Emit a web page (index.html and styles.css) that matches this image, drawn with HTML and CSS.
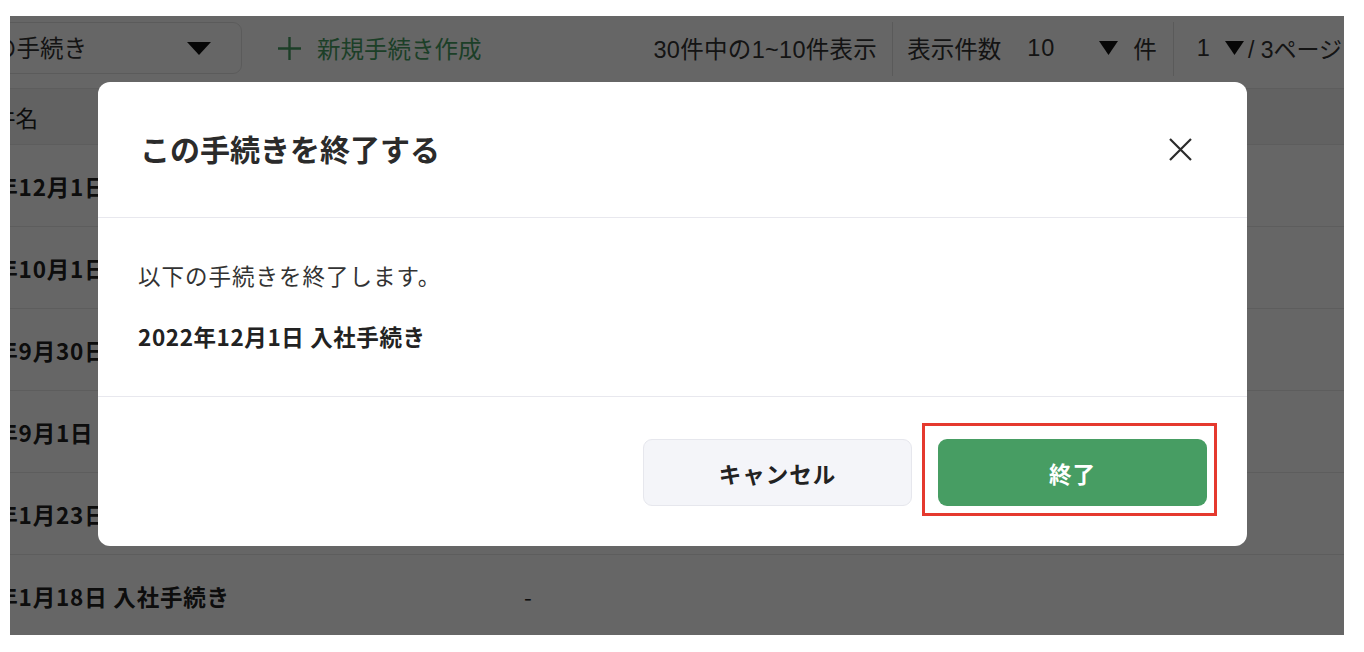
FILE: index.html
```html
<!DOCTYPE html>
<html lang="ja">
<head>
<meta charset="utf-8">
<title>手続き一覧</title>
<link rel="stylesheet" href="styles.css">
</head>
<body>
<div class="screen">
  <div class="page">
    <div class="toolbar">
      <div class="select">
        <span class="select-text">すべての手続き</span>
        <svg class="caret" width="24" height="13" viewBox="0 0 24 13"><polygon points="0,0 24,0 12,13" fill="#111"/></svg>
      </div>
      <div class="new-proc">
        <svg class="plus" width="25" height="25" viewBox="0 0 25 25"><path d="M12.5 1v23M1 12.5h23" stroke="#479d63" stroke-width="2.4" fill="none"/></svg>
        <span>新規手続き作成</span>
      </div>
      <div class="count">30件中の1~10件表示</div>
      <div class="sep"></div>
      <div class="perpage">
        <span>表示件数</span>
        <span class="num">10</span>
        <svg class="small-caret" width="19" height="14" viewBox="0 0 19 14"><polygon points="0,0 19,0 9.5,14" fill="#111"/></svg>
        <span class="unit">件</span>
      </div>
      <div class="sep"></div>
      <div class="pager">
        <span class="num">1</span>
        <svg class="small-caret" width="19" height="14" viewBox="0 0 19 14"><polygon points="0,0 19,0 9.5,14" fill="#111"/></svg>
        <span class="pages">/ 3ページ</span>
      </div>
    </div>
    <div class="table">
      <div class="row head"><div class="c1">件名</div><div class="c2">備考</div></div>
      <div class="row"><div class="c1 name">2022年12月1日 入社手続き</div><div class="c2">-</div></div>
      <div class="row"><div class="c1 name">2022年10月1日 入社手続き</div><div class="c2">-</div></div>
      <div class="row"><div class="c1 name">2022年9月30日 入社手続き</div><div class="c2">-</div></div>
      <div class="row"><div class="c1 name">2022年9月1日 入社手続き</div><div class="c2">-</div></div>
      <div class="row"><div class="c1 name">2022年1月23日 入社手続き</div><div class="c2">-</div></div>
      <div class="row"><div class="c1 name">2022年1月18日 入社手続き</div><div class="c2">-</div></div>
    </div>
  </div>
  <div class="overlay">
    <div class="modal">
      <div class="modal-head">
        <h2 class="modal-title">この手続きを終了する</h2>
        <svg class="close" width="23" height="23" viewBox="0 0 23 23"><path d="M1 1L22 22M22 1L1 22" stroke="#2a2a2a" stroke-width="2.2" fill="none"/></svg>
      </div>
      <div class="modal-body">
        <p class="msg">以下の手続きを終了します。</p>
        <p class="target">2022年12月1日 入社手続き</p>
      </div>
      <div class="modal-foot">
        <button class="btn btn-cancel">キャンセル</button>
        <div class="finish-wrap">
          <button class="btn btn-finish">終了</button>
          <div class="highlight"></div>
        </div>
      </div>
    </div>
  </div>
</div>
</body>
</html>
```
FILE: styles.css
```css
* { box-sizing: border-box; }
html, body { margin: 0; padding: 0; background: #fff; }
body { font-family: "Noto Sans CJK JP", "Noto Sans", sans-serif; color: #333; }

.screen {
  position: relative;
  margin: 16px 0 0 10px;
  width: 1334px;
  height: 619px;
  overflow: hidden;
  background: #fff;
}

.page { width: 1334px; }

.toolbar {
  height: 72px;
  display: flex;
  align-items: flex-start;
  padding-top: 6px;
  font-family: "Liberation Sans", "Noto Sans CJK JP", sans-serif;
  font-size: 23.5px;
  color: #333;
  white-space: nowrap;
}

.select {
  flex: none;
  width: 360px;
  height: 52px;
  margin-left: -128px;
  padding: 0 30px 0 42px;
  display: flex;
  align-items: center;
  border: 1px solid #e4e4e4;
  border-radius: 9px;
  font-family: "Noto Sans CJK JP", sans-serif;
}
.select-text { line-height: 1; }
.caret { margin-left: auto; }

.new-proc {
  height: 52px;
  margin-left: 35px;
  display: flex;
  align-items: center;
  gap: 15px;
  color: #479d63;
  font-family: "Noto Sans CJK JP", sans-serif;
}

.count {
  height: 52px;
  margin-left: 172px;
  display: flex;
  align-items: center;
  letter-spacing: 0.3px;
}

.sep {
  flex: none;
  width: 1px;
  height: 54px;
  margin: 0 14px 0 15px;
  background: #e2e2e2;
}

.perpage, .pager {
  flex: none;
  height: 52px;
  display: flex;
  align-items: center;
}
.perpage .num { margin-left: 26px; letter-spacing: 1px; }
.perpage .small-caret { margin-left: 44px; }
.perpage .unit { margin-left: 15px; margin-right: 1px; }
.pager .num { margin-left: 9px; }
.pager .small-caret { margin-left: 15px; }
.pager .pages { margin-left: 4px; font-size: 23px; }

.table { border-top: 1px solid #e8e8e8; }
.row {
  height: 82px;
  display: flex;
  align-items: center;
  border-bottom: 1px solid #e8e8e8;
  font-size: 22.5px;
  color: #222;
  white-space: nowrap;
}
.row.head {
  height: 56px;
  background: #f4f4f4;
  font-weight: 400;
}
.c1 { width: 514px; flex: none; }
.row.head .c1 { text-indent: -17px; }
.c1.name { text-indent: -71px; font-weight: 700; letter-spacing: 0.8px; }
.c2 { flex: none; }

.overlay {
  position: absolute;
  inset: 0;
  background: rgba(0, 0, 0, 0.6);
  padding: 66px 0 0 88px;
}

.modal {
  width: 1149px;
  background: #fff;
  border-radius: 12px;
}

.modal-head {
  height: 136px;
  padding: 0 55px 0 42px;
  display: flex;
  align-items: center;
  justify-content: space-between;
  border-bottom: 1px solid #e8e8ee;
}
.modal-title {
  margin: 0 0 4px;
  font-size: 30px;
  font-weight: 700;
  color: #2b2b2b;
  line-height: 1.2;
}

.modal-body {
  padding: 41px 40px 43px;
  border-bottom: 1px solid #e8e8ee;
}
.modal-body p {
  margin: 0;
  font-size: 22.5px;
  line-height: 33px;
  color: #333;
  letter-spacing: 1px;
}
.modal-body .target {
  margin-top: 28px;
  font-weight: 700;
  color: #222;
  letter-spacing: 0.6px;
}

.modal-foot {
  padding: 42px 40px 40px;
  display: flex;
  justify-content: flex-end;
  gap: 26px;
}

.btn {
  width: 269px;
  height: 67px;
  border-radius: 9px;
  font-family: "Noto Sans CJK JP", sans-serif;
  font-size: 22.5px;
  font-weight: 700;
  cursor: pointer;
}
.btn-cancel {
  background: #f4f5f9;
  border: 1px solid #e6e7ed;
  color: #222;
  letter-spacing: 1px;
}
.btn-finish {
  display: block;
  background: #479d63;
  border: none;
  color: #fff;
  letter-spacing: 1px;
}

.finish-wrap { position: relative; }
.highlight {
  position: absolute;
  top: -16px;
  left: -16px;
  right: -10px;
  bottom: -10px;
  border: 3px solid #e5392e;
  pointer-events: none;
}
```
